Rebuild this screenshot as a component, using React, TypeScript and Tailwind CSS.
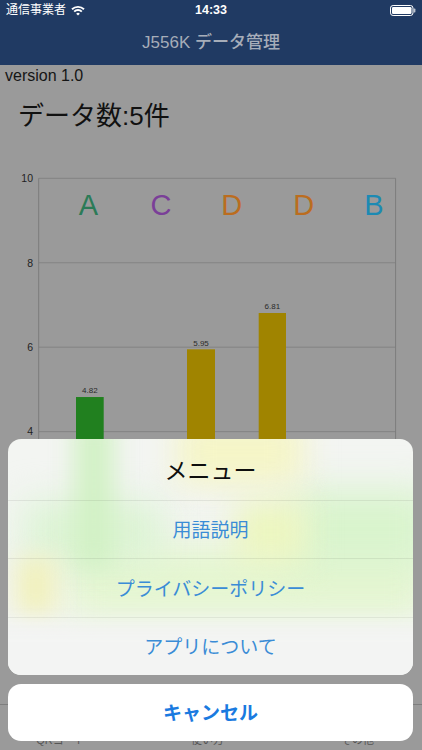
import React from "react";

const GRID = [10, 8, 6, 4, 2, 0];
const TOP = 8.3;
const STEP = 84.45;
const Y0 = TOP + STEP * 5;
const U = STEP / 2;

const letters = [
  { t: "A", x: 88.5, c: "#2b7b57" },
  { t: "C", x: 161, c: "#7a3f98" },
  { t: "D", x: 231.7, c: "#bb6d1f" },
  { t: "D", x: 303.7, c: "#bb6d1f" },
  { t: "B", x: 374, c: "#1c8ab3" },
];

const bars = [
  { x: 76, w: 27.7, v: 4.82, c: "#21801f" },
  { x: 187, w: 28, v: 5.95, c: "#a08400" },
  { x: 258.7, w: 27.3, v: 6.81, c: "#a08400" },
];

function Wifi() {
  return (
    <svg width="14" height="11" viewBox="0 0 14 11" className="block">
      <path d="M1 4.3 A8.6 8.6 0 0 1 13 4.3" fill="none" stroke="white" strokeWidth="1.9" />
      <path d="M3.2 6.6 A5.3 5.3 0 0 1 10.8 6.6" fill="none" stroke="white" strokeWidth="1.9" />
      <path d="M5.2 8.7 A2.5 2.5 0 0 1 8.8 8.7 L7 10.6 Z" fill="white" />
    </svg>
  );
}

function Battery() {
  return (
    <svg width="26" height="11" viewBox="0 0 26 11" className="block">
      <rect x="0.5" y="0.5" width="22.5" height="10" rx="2.6" fill="none" stroke="white" strokeWidth="1" />
      <rect x="2" y="2" width="19.5" height="7" rx="1.2" fill="white" />
      <rect x="23.8" y="3.6" width="1.6" height="3.8" rx="0.6" fill="white" opacity="0.7" />
    </svg>
  );
}

function Chart() {
  return (
    <svg width="422" height="534" viewBox="0 0 422 534" className="block shrink-0">
      {GRID.map((v, i) => {
        const y = TOP + i * STEP;
        return (
          <g key={v}>
            <line x1={38.7} x2={395.6} y1={y} y2={y} stroke="#838383" strokeWidth={1} />
            <text
              x={33}
              y={y + 3.8}
              textAnchor="end"
              fontSize="10.5"
              fontFamily="Liberation Sans, sans-serif"
              fill="#1f1f1f"
            >
              {v}
            </text>
          </g>
        );
      })}
      <line x1={38.7} x2={38.7} y1={TOP} y2={Y0} stroke="#7c7c7c" strokeWidth={1} />
      <line x1={395.6} x2={395.6} y1={TOP} y2={Y0} stroke="#7c7c7c" strokeWidth={1} />
      {letters.map((l, i) => (
        <text
          key={i}
          x={l.x}
          y={45}
          textAnchor="middle"
          fontSize="29"
          fontFamily="Liberation Sans, sans-serif"
          fill={l.c}
        >
          {l.t}
        </text>
      ))}
      {bars.map((b, i) => {
        const top = Y0 - b.v * U;
        return (
          <g key={i}>
            <rect x={b.x} y={top} width={b.w} height={Y0 - top} fill={b.c} />
            <text
              x={b.x + b.w / 2}
              y={top - 3.7}
              textAnchor="middle"
              fontSize="8"
              fontFamily="Liberation Sans, sans-serif"
              fill="#2a2a2a"
            >
              {b.v.toFixed(2)}
            </text>
          </g>
        );
      })}
    </svg>
  );
}

export default function App() {
  return (
    <div className="relative w-[422px] h-[750px] overflow-hidden bg-[#9a9a9a] flex flex-col font-['Liberation_Sans','Noto_Sans_CJK_JP',sans-serif]">
      <header className="h-[65px] shrink-0 bg-[#203a63] flex flex-col">
        <div className="h-[20px] grid grid-cols-3 items-center px-[6px] text-white">
          <div className="flex items-center gap-[5px] text-[12px] leading-[14px]">
            <span>通信事業者</span>
            <Wifi />
          </div>
          <div className="text-center text-[12.5px] font-semibold leading-[14px]">14:33</div>
          <div className="flex justify-end">
            <Battery />
          </div>
        </div>
        <div className="flex-1 flex items-center justify-center text-[17px] font-medium text-[#a6adb9]">
          J556K データ管理
        </div>
      </header>

      <div className="mt-[1px] pl-[5px] h-[20px] text-[16px] leading-[20px] text-[#151515]">version 1.0</div>
      <div className="mt-[17px] pl-[18px] h-[26px] text-[26px] leading-[26px] text-[#111]">データ数:5件</div>

      <div className="mt-[41px]">
        <Chart />
      </div>

      <div className="h-[46px] shrink-0 border-t border-[#7e7e7e] flex items-end pb-[3px] text-[11px] leading-[13px] text-[#565656]">
        <div className="w-[122px] text-center">QRコード</div>
        <div className="w-[171px] text-center">使い方</div>
        <div className="w-[129px] text-center">その他</div>
      </div>

      {/* Action sheet */}
      <div className="absolute left-[8px] right-[9px] bottom-[9px] flex flex-col gap-[9px] font-['Noto_Sans_CJK_JP',sans-serif]">
        <div className="relative overflow-hidden rounded-[13px] bg-[#f3f5f2]">
          <div className="absolute inset-0 pointer-events-none">
            <div className="absolute left-[60px] top-[105px] w-[360px] h-[75px] bg-[#e5f6d1] blur-[18px]" />
            <div className="absolute left-[15px] top-[62px] w-[140px] h-[60px] bg-[#dcf4d4] blur-[18px]" />
            <div className="absolute left-[285px] top-[50px] w-[140px] h-[80px] bg-[#d9f4cd] blur-[18px]" />
            <div className="absolute left-[66px] top-[-20px] w-[40px] h-[150px] bg-[#d2f1c5] blur-[12px]" />
            <div className="absolute left-[170px] top-[-20px] w-[125px] h-[65px] bg-[#f5f5c6] blur-[16px]" />
            <div className="absolute left-[228px] top-[62px] w-[70px] h-[60px] bg-[#ecf6bf] blur-[16px]" />
            <div className="absolute left-[8px] top-[118px] w-[40px] h-[58px] bg-[#f1f1bd] blur-[12px]" />
            <div className="absolute left-[-30px] top-[186px] w-[480px] h-[80px] bg-[#f3f4f3] blur-[10px]" />
          </div>
          <div className="relative flex flex-col">
            <div className="h-[61px] flex items-center justify-center text-[23px] text-[#0e0e0e]">メニュー</div>
            <div className="h-px bg-black/[0.07]" />
            <div className="h-[57px] flex items-center justify-center text-[19px] text-[#3a8cd6]">用語説明</div>
            <div className="h-px bg-black/[0.07]" />
            <div className="h-[58px] flex items-center justify-center text-[19px] text-[#3a8cd6]">プライバシーポリシー</div>
            <div className="h-px bg-black/[0.06]" />
            <div className="h-[57px] flex items-center justify-center text-[19px] text-[#3a8cd6]">アプリについて</div>
          </div>
        </div>
        <div className="h-[57px] rounded-[13px] bg-white flex items-center justify-center text-[19px] font-bold text-[#1a7ae0]">
          キャンセル
        </div>
      </div>
    </div>
  );
}
